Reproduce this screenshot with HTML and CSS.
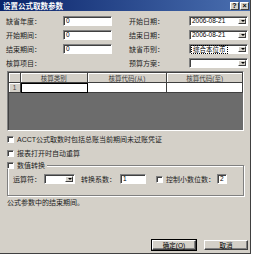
FILE: index.html
```html
<!DOCTYPE html>
<html lang="zh-CN">
<head>
    <meta charset="UTF-8">
    <title>设置公式取数参数</title>
    <link rel="stylesheet" href="styles.css">
</head>
<body>
    <div class="dialog">
        <div class="titlebar">
            <span class="title">设置公式取数参数</span>
            <div class="tbtns">
                <span class="tbtn">?</span>
                <span class="tbtn">×</span>
            </div>
        </div>

        <div class="fields">
            <span class="label">缺省年度：</span>
            <span class="box">0</span>
            <span></span>
            <span class="label">开始日期：</span>
            <span class="box combo">2006-08-21<i class="drop"></i></span>

            <span class="label">开始期间：</span>
            <span class="box">0</span>
            <span></span>
            <span class="label">结束日期：</span>
            <span class="box combo">2006-08-21<i class="drop"></i></span>

            <span class="label">结束期间：</span>
            <span class="box">0</span>
            <span></span>
            <span class="label">缺省币别：</span>
            <span class="box combo"><b class="sel">综合本位币</b><i class="drop"></i></span>

            <span class="label">核算项目：</span>
            <span></span>
            <span></span>
            <span class="label">预算方案：</span>
            <span class="box combo"><i class="drop"></i></span>
        </div>

        <div class="table">
            <div class="row head">
                <span class="c0"></span>
                <span class="c1">核算类别</span>
                <span class="c2">核算代码(从)</span>
                <span class="c3">核算代码(至)</span>
            </div>
            <div class="row">
                <span class="c0">1</span>
                <span class="c1 cell focus"></span>
                <span class="c2 cell"></span>
                <span class="c3 cell"></span>
            </div>
        </div>

        <div class="checks">
            <div class="check"><i class="cb"></i>ACCT公式取数时包括总账当前期间未过账凭证</div>
            <div class="check"><i class="cb"></i>报表打开时自动重算</div>
        </div>

        <fieldset class="group">
            <legend class="check"><i class="cb"></i>数值转换</legend>
            <div class="grow">
                <span>运算符：</span>
                <span class="box combo op"><i class="drop"></i></span>
                <span class="gl">转换系数：</span>
                <span class="box num">1</span>
                <i class="cb gcb"></i>
                <span>控制小数位数：</span>
                <span class="box dig">2</span>
            </div>
        </fieldset>

        <p class="hint">公式参数中的结束期间。</p>

        <div class="buttons">
            <span class="btn default">确定(O)</span>
            <span class="btn">取消</span>
        </div>
    </div>
</body>
</html>
```

FILE: styles.css
```css
*{
    margin: 0;
    padding: 0;
    box-sizing: border-box;
}
body{
    background-color: #fff;
    font-family: "Liberation Sans", "Noto Sans CJK SC", sans-serif;
    font-size: 7px;
    color: #222;
}
.dialog{
    width: 251px;
    height: 254px;
    background-color: #d4d0c8;
    border-right: 1px solid #404040;
    border-bottom: 1px solid #404040;
    display: flex;
    flex-direction: column;
}
.titlebar{
    height: 11px;
    background: linear-gradient(to right, #0a246a, #4a6fb0);
    display: flex;
    align-items: center;
    justify-content: space-between;
    padding: 0 1px 0 3px;
}
.title{
    color: #fff;
    font-weight: bold;
    font-size: 7.5px;
}
.tbtns{
    display: flex;
    gap: 1px;
}
.tbtn{
    width: 9px;
    height: 8px;
    background-color: #d4d0c8;
    border: 1px solid;
    border-color: #fff #404040 #404040 #fff;
    font-size: 7px;
    font-weight: bold;
    line-height: 6px;
    text-align: center;
    color: #000;
}

/* top fields */
.fields{
    display: grid;
    grid-template-columns: 57px 49px 17px 60px 59px;
    grid-auto-rows: 10px;
    row-gap: 4px;
    margin: 5px 0 0 6px;
    align-items: center;
}
.box{
    height: 10px;
    background-color: #fff;
    border: 1px solid;
    border-color: #808080 #fff #fff #808080;
    box-shadow: inset 1px 1px #404040;
    padding-left: 2px;
    line-height: 8px;
    font-size: 6.5px;
    color: #000;
    display: flex;
    align-items: center;
    position: relative;
}
.combo{
    padding-right: 9px;
}
.drop{
    position: absolute;
    right: 1px;
    top: 1px;
    width: 8px;
    height: 6px;
    background-color: #d4d0c8;
    border: 1px solid;
    border-color: #fff #404040 #404040 #fff;
}
.drop::after{
    content: "";
    position: absolute;
    left: 2px;
    top: 1px;
    border-left: 2px solid transparent;
    border-right: 2px solid transparent;
    border-top: 2px solid #000;
}
.sel{
    font-weight: normal;
    color: #000;
    outline: 1px dotted #000;
    padding: 0 1px;
    line-height: 7px;
}

/* table */
.table{
    margin: 3px 0 0 7px;
    width: 237px;
    height: 60px;
    background-color: #6c6c6c;
    border: 1px solid;
    border-color: #808080 #fff #fff #808080;
    box-shadow: inset 1px 1px #404040;
    padding: 1px 0 0 1px;
}
.row{
    display: flex;
    height: 10px;
}
.row span{
    display: flex;
    align-items: center;
    justify-content: center;
    border-right: 1px solid #404040;
    border-bottom: 1px solid #404040;
}
.head span, .row .c0{
    background-color: #d4d0c8;
    box-shadow: inset 1px 1px #fff;
    color: #444;
    font-size: 6.5px;
}
.c0{ width: 12px; }
.c1{ width: 67px; }
.c2{ width: 80px; }
.c3{ width: 76px; }
.row .cell{
    background-color: #fff;
}
.row .focus{
    border: 1px solid #000;
}

/* checkboxes */
.checks{
    margin: 4px 0 0 7px;
    display: flex;
    flex-direction: column;
    gap: 6px;
}
.check{
    display: flex;
    align-items: center;
    gap: 3px;
    height: 8px;
}
.cb{
    width: 7px;
    height: 7px;
    background-color: #fff;
    border: 1px solid;
    border-color: #808080 #fff #fff #808080;
    box-shadow: inset 1px 1px #404040;
}
.group{
    margin: 4px 6px 0 7px;
    height: 35px;
    border: 1px solid #808080;
    box-shadow: 1px 1px #fff, inset 1px 1px #fff;
}
.group legend{
    padding-right: 2px;
    margin-left: -1px;
    background-color: #d4d0c8;
}
.grow{
    display: flex;
    align-items: center;
    margin: 5px 0 0 5px;
}
.op{
    width: 31px;
    margin-left: 3px;
}
.gl{
    margin-left: 6px;
}
.num{
    width: 26px;
    margin-left: 4px;
}
.gcb{
    margin: 0 3px 0 10px;
}
.dig{
    width: 10px;
    margin-left: 2px;
}
.hint{
    margin: 1px 0 0 7px;
    color: #222;
}
.buttons{
    margin-top: auto;
    margin-bottom: 3px;
    display: flex;
    justify-content: flex-end;
    gap: 8px;
    padding-right: 2px;
}
.btn{
    width: 44px;
    height: 10px;
    border: 1px solid;
    border-color: #fff #404040 #404040 #fff;
    box-shadow: inset -1px -1px #808080;
    display: flex;
    align-items: center;
    justify-content: center;
    color: #000;
    font-size: 6.5px;
}
.btn.default{
    outline: 1px solid #000;
}
```
